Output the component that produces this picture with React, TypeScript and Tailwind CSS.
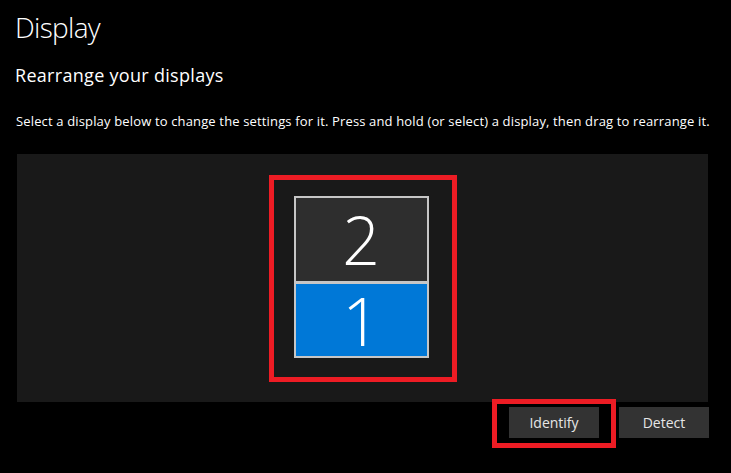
export default function App() {
  const font = { fontFamily: '"Open Sans", "Noto Sans", sans-serif' };
  return (
    <div className="w-[731px] h-[473px] bg-black text-white overflow-hidden" style={font}>
      <div className="pl-[15px] pr-[22px]">
        <div className="pt-[8px] h-[46px] text-[28px] leading-[38px] font-light tracking-[-0.7px]">Display</div>
        <div className="mt-[17px] h-[25px] text-[18px] leading-[25px] font-normal tracking-[0.3px]">Rearrange your displays</div>
        <div className="mt-[24px] h-[18px] pl-[1px] text-[13px] leading-[18px] whitespace-nowrap tracking-[0.15px]">
          Select a display below to change the settings for it. Press and hold (or select) a display, then drag to rearrange it.
        </div>
        <div className="mt-[24px] ml-[2px] mr-[1px] h-[248px] bg-[#191919] flex items-center justify-center">
          <div className="w-[188px] h-[207px] border-[5px] border-[#ed1c24] pt-[16px] pl-[20px]">
            <div className="w-[135px] h-[162px] border-2 border-[#c6c6c6] flex flex-col">
              <div className="h-[83px] bg-[#2e2e2e] flex items-center justify-center text-[66px] font-light leading-[56px]">
                <span>2</span>
              </div>
              <div className="h-[3px] bg-[#c6c6c6]" />
              <div className="flex-1 bg-[#0078d7] flex items-center justify-center text-[66px] font-light leading-[56px]">
                <span>1</span>
              </div>
            </div>
          </div>
        </div>
        <div className="mt-[5px] flex justify-end gap-[20px]">
          <div className="relative">
            <button className="w-[90px] h-[31px] bg-[#333333] text-[14px] text-[#e6e6e6]">Identify</button>
            <div className="absolute left-[-17px] right-[-17px] top-[-8px] bottom-[-10px] border-[5px] border-[#ed1c24] pointer-events-none" />
          </div>
          <button className="w-[90px] h-[31px] bg-[#333333] text-[14px] text-[#e6e6e6]">Detect</button>
        </div>
      </div>
    </div>
  );
}
